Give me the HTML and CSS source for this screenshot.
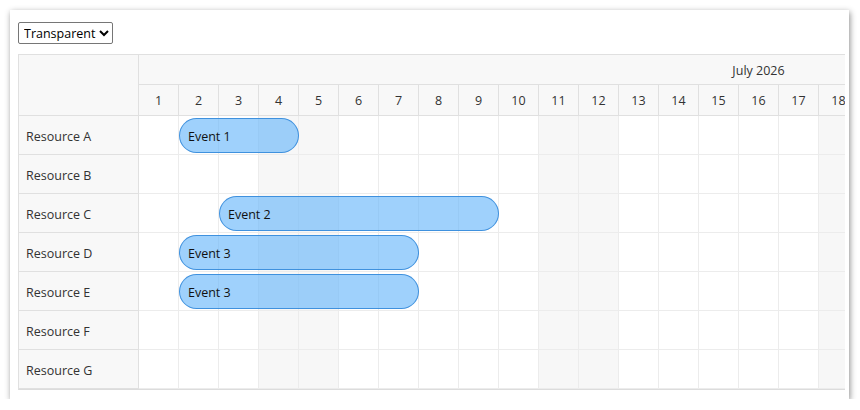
FILE: index.html
```html
<!DOCTYPE html>
<html>
<head>
<meta charset="utf-8">
<link rel="stylesheet" href="styles.css">
</head>
<body>
<div class="card">
  <div class="toolbar">
    <select class="mode"><option>Transparent</option><option>Opaque</option></select>
  </div>
  <div class="scheduler">
    <div class="header">
      <div class="corner"></div>
      <div class="timeline">
        <div class="month">July 2026</div>
        <div class="days">
          <div class="day">1</div><div class="day">2</div><div class="day">3</div><div class="day">4</div><div class="day">5</div><div class="day">6</div><div class="day">7</div><div class="day">8</div><div class="day">9</div><div class="day">10</div><div class="day">11</div><div class="day">12</div><div class="day">13</div><div class="day">14</div><div class="day">15</div><div class="day">16</div><div class="day">17</div><div class="day">18</div><div class="day">19</div><div class="day">20</div>
        </div>
      </div>
    </div>

    <div class="row">
      <div class="res">Resource A</div>
      <div class="cells">
        <div class="cell"></div><div class="cell"><div class="event" style="width:120px">Event 1</div></div><div class="cell"></div><div class="cell wk"></div><div class="cell wk"></div><div class="cell"></div><div class="cell"></div><div class="cell"></div><div class="cell"></div><div class="cell"></div><div class="cell wk"></div><div class="cell wk"></div><div class="cell"></div><div class="cell"></div><div class="cell"></div><div class="cell"></div><div class="cell"></div><div class="cell wk"></div><div class="cell wk"></div><div class="cell"></div>
      </div>
    </div>
    <div class="row">
      <div class="res">Resource B</div>
      <div class="cells">
        <div class="cell"></div><div class="cell"></div><div class="cell"></div><div class="cell wk"></div><div class="cell wk"></div><div class="cell"></div><div class="cell"></div><div class="cell"></div><div class="cell"></div><div class="cell"></div><div class="cell wk"></div><div class="cell wk"></div><div class="cell"></div><div class="cell"></div><div class="cell"></div><div class="cell"></div><div class="cell"></div><div class="cell wk"></div><div class="cell wk"></div><div class="cell"></div>
      </div>
    </div>
    <div class="row">
      <div class="res">Resource C</div>
      <div class="cells">
        <div class="cell"></div><div class="cell"></div><div class="cell"><div class="event" style="width:280px">Event 2</div></div><div class="cell wk"></div><div class="cell wk"></div><div class="cell"></div><div class="cell"></div><div class="cell"></div><div class="cell"></div><div class="cell"></div><div class="cell wk"></div><div class="cell wk"></div><div class="cell"></div><div class="cell"></div><div class="cell"></div><div class="cell"></div><div class="cell"></div><div class="cell wk"></div><div class="cell wk"></div><div class="cell"></div>
      </div>
    </div>
    <div class="row">
      <div class="res">Resource D</div>
      <div class="cells">
        <div class="cell"></div><div class="cell"><div class="event" style="width:240px">Event 3</div></div><div class="cell"></div><div class="cell wk"></div><div class="cell wk"></div><div class="cell"></div><div class="cell"></div><div class="cell"></div><div class="cell"></div><div class="cell"></div><div class="cell wk"></div><div class="cell wk"></div><div class="cell"></div><div class="cell"></div><div class="cell"></div><div class="cell"></div><div class="cell"></div><div class="cell wk"></div><div class="cell wk"></div><div class="cell"></div>
      </div>
    </div>
    <div class="row">
      <div class="res">Resource E</div>
      <div class="cells">
        <div class="cell"></div><div class="cell"><div class="event" style="width:240px">Event 3</div></div><div class="cell"></div><div class="cell wk"></div><div class="cell wk"></div><div class="cell"></div><div class="cell"></div><div class="cell"></div><div class="cell"></div><div class="cell"></div><div class="cell wk"></div><div class="cell wk"></div><div class="cell"></div><div class="cell"></div><div class="cell"></div><div class="cell"></div><div class="cell"></div><div class="cell wk"></div><div class="cell wk"></div><div class="cell"></div>
      </div>
    </div>
    <div class="row">
      <div class="res">Resource F</div>
      <div class="cells">
        <div class="cell"></div><div class="cell"></div><div class="cell"></div><div class="cell wk"></div><div class="cell wk"></div><div class="cell"></div><div class="cell"></div><div class="cell"></div><div class="cell"></div><div class="cell"></div><div class="cell wk"></div><div class="cell wk"></div><div class="cell"></div><div class="cell"></div><div class="cell"></div><div class="cell"></div><div class="cell"></div><div class="cell wk"></div><div class="cell wk"></div><div class="cell"></div>
      </div>
    </div>
    <div class="row">
      <div class="res">Resource G</div>
      <div class="cells">
        <div class="cell"></div><div class="cell"></div><div class="cell"></div><div class="cell wk"></div><div class="cell wk"></div><div class="cell"></div><div class="cell"></div><div class="cell"></div><div class="cell"></div><div class="cell"></div><div class="cell wk"></div><div class="cell wk"></div><div class="cell"></div><div class="cell"></div><div class="cell"></div><div class="cell"></div><div class="cell"></div><div class="cell wk"></div><div class="cell wk"></div><div class="cell"></div>
      </div>
    </div>
  </div>
</div>
</body>
</html>
```

FILE: styles.css
```css
* { box-sizing: border-box; }

html, body {
  margin: 0;
  padding: 0;
  background: #ffffff;
}

body {
  padding: 10px 0 0 10px;
  font-family: "Open Sans", "Noto Sans", sans-serif;
  font-size: 12px;
  color: #333333;
}

.card {
  width: 839px;
  height: 389px;
  background: #ffffff;
  padding: 12px 0 0 8px;
  box-shadow: 1px 2px 6px rgba(0, 0, 0, 0.45);
}

.toolbar {
  display: flex;
  height: 32px;
}

.mode {
  width: 95px;
  height: 22px;
  font-family: "Open Sans", "Noto Sans", sans-serif;
  font-size: 12.5px;
  color: #000000;
  background: #ffffff;
  border: 1px solid #767676;
  border-radius: 2px;
  padding: 0 0 0 1px;
}

.scheduler {
  width: 827px;
  border-top: 1px solid #e0e0e0;
  border-left: 1px solid #e0e0e0;
  border-bottom: 1px solid #dcdcdc;
  overflow: hidden;
}

.header {
  display: flex;
  height: 61px;
  background: #f8f8f8;
}

.corner {
  flex: 0 0 120px;
  border-right: 1px solid #e0e0e0;
  border-bottom: 1px solid #e0e0e0;
}

.timeline {
  display: flex;
  flex-direction: column;
}

.month {
  width: 1240px;
  height: 30px;
  flex: 0 0 30px;
  display: flex;
  align-items: center;
  justify-content: center;
  border-bottom: 1px solid #e0e0e0;
  border-right: 1px solid #e0e0e0;
  font-size: 12.5px;
  padding-top: 1px;
}

.days {
  display: flex;
  height: 31px;
}

.day {
  flex: 0 0 40px;
  display: flex;
  align-items: center;
  justify-content: center;
  border-right: 1px solid #e0e0e0;
  border-bottom: 1px solid #e0e0e0;
  font-size: 12.5px;
}

.row {
  display: flex;
  height: 39px;
}

.res {
  flex: 0 0 120px;
  display: flex;
  align-items: center;
  padding-left: 7px;
  padding-top: 2px;
  background: #f8f8f8;
  border-right: 1px solid #e0e0e0;
  border-bottom: 1px solid #e0e0e0;
  font-size: 12.5px;
}

.cells {
  display: flex;
}

.cell {
  position: relative;
  flex: 0 0 40px;
  height: 39px;
  border-right: 1px solid #ececec;
  border-bottom: 1px solid #ececec;
  background: #ffffff;
}

.cell.wk {
  background: #f7f7f7;
}

.event {
  position: absolute;
  left: 0;
  top: 2px;
  height: 35px;
  z-index: 1;
  display: flex;
  align-items: center;
  padding-left: 8px;
  padding-top: 2px;
  border: 1px solid rgba(40, 130, 215, 0.8);
  border-radius: 18px;
  background: rgba(100, 180, 250, 0.62);
  color: #111111;
  font-size: 12.5px;
  white-space: nowrap;
}
```
